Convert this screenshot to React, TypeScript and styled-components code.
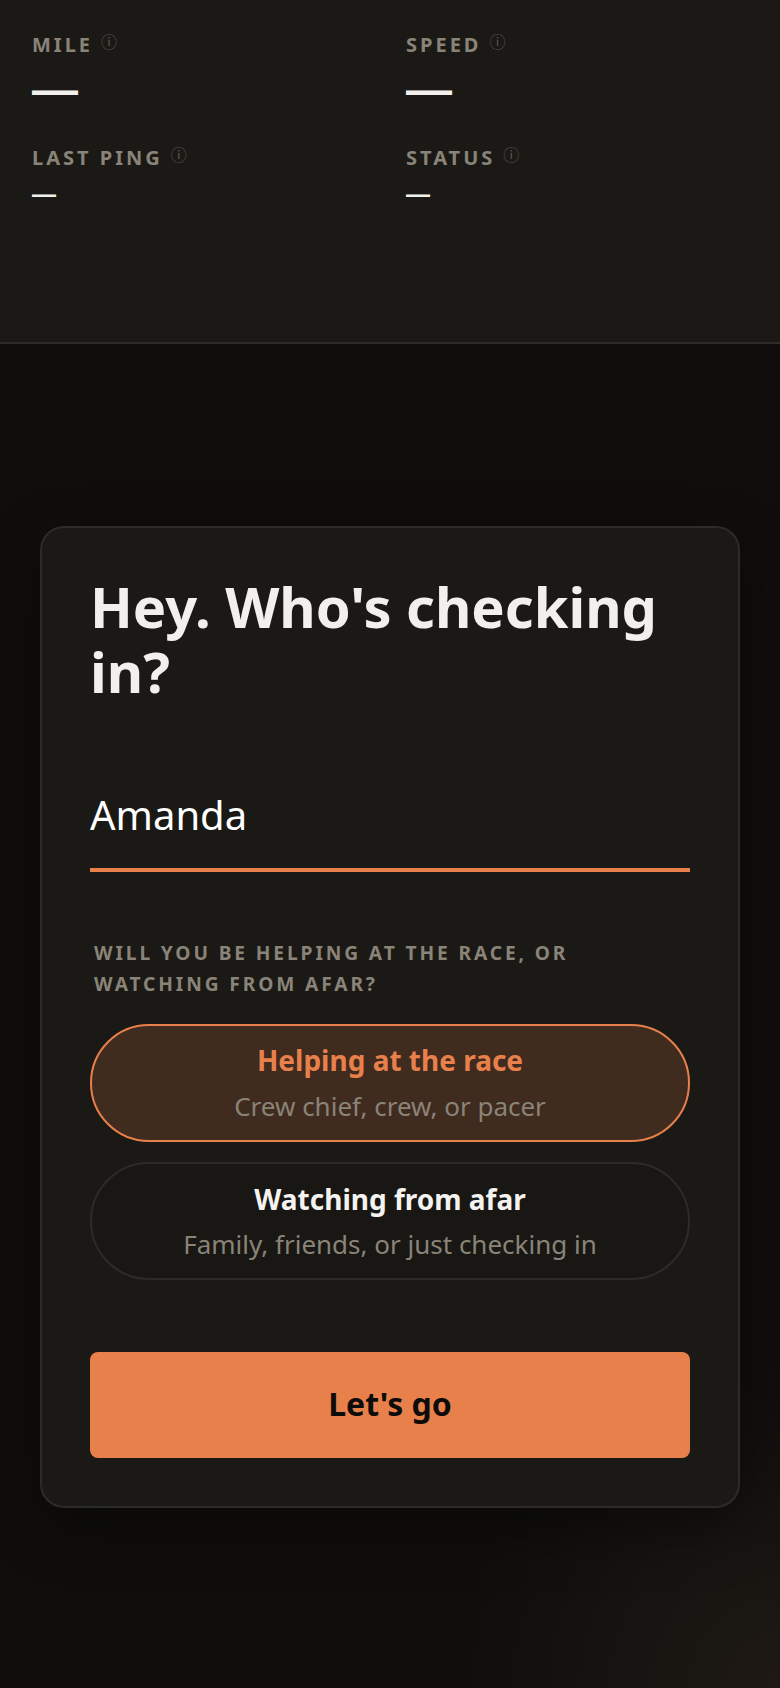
import React from "react";
import styled, { createGlobalStyle } from "styled-components";

const ACCENT = "#e8804c";
const MUTED = "#8a8378";

const Global = createGlobalStyle`
  * { box-sizing: border-box; }
  html, body { margin: 0; padding: 0; background: #0f0e0c; }
  body { font-family: "Noto Sans", sans-serif; color: #f2f0ec; }
`;

const STATS = [
  { label: "MILE", large: true },
  { label: "SPEED", large: true },
  { label: "LAST PING", large: false },
  { label: "STATUS", large: false },
];

const App = () => {
  return (
    <Page>
      <Global />
      <StatsPanel>
        <StatsGrid>
          {STATS.map(stat => (
            <Stat key={stat.label}>
              <StatLabel>
                {stat.label}
                <InfoMark>ⓘ</InfoMark>
              </StatLabel>
              <StatValue $large={stat.large}>—</StatValue>
            </Stat>
          ))}
        </StatsGrid>
      </StatsPanel>

      <Main>
        <Card>
          <Title>Hey. Who's checking in?</Title>
          <NameInput defaultValue="Amanda" />
          <Question>Will you be helping at the race, or watching from afar?</Question>
          <Options>
            <Option $selected>
              <OptionTitle $selected>Helping at the race</OptionTitle>
              <OptionHint $selected>Crew chief, crew, or pacer</OptionHint>
            </Option>
            <Option>
              <OptionTitle>Watching from afar</OptionTitle>
              <OptionHint>Family, friends, or just checking in</OptionHint>
            </Option>
          </Options>
          <GoButton>Let's go</GoButton>
        </Card>
      </Main>
    </Page>
  );
};

const Page = styled.div`
  width: 780px;
  height: 1688px;
  overflow: hidden;
  display: flex;
  flex-direction: column;
  background: radial-gradient(circle at 100% 100%, #1e1915 0, #0f0e0c 320px);
`;

const StatsPanel = styled.header`
  height: 344px;
  padding: 23px 32px 0;
  background: #1a1915;
  border-bottom: 2px solid #2c2b28;
`;

const StatsGrid = styled.div`
  display: grid;
  grid-template-columns: 374px 1fr;
  row-gap: 21px;
`;

const Stat = styled.div`
  display: flex;
  flex-direction: column;
`;

const StatLabel = styled.div`
  font-size: 20px;
  line-height: 36px;
  font-weight: 700;
  letter-spacing: 0.15em;
  color: ${MUTED};
`;

const InfoMark = styled.span`
  margin-left: 8px;
  font-family: "Noto Sans CJK JP", sans-serif;
  font-size: 16px;
  font-weight: 400;
  letter-spacing: 0;
  color: #5c5852;
  vertical-align: 4px;
`;

const StatValue = styled.div<{ $large?: boolean }>`
  font-family: "Liberation Sans", sans-serif;
  font-weight: 700;
  font-size: ${p => (p.$large ? "46px" : "24px")};
  line-height: ${p => (p.$large ? "52px" : "36px")};
`;

const Main = styled.main`
  flex: 1;
  padding: 182px 40px 0;
`;

const Card = styled.section`
  display: flex;
  flex-direction: column;
  padding: 46px 48px 48px;
  background: #1a1915;
  border: 2px solid #2c2b28;
  border-radius: 24px;
  box-shadow: 0 20px 60px rgba(0, 0, 0, 0.4);
`;

const Title = styled.h1`
  margin: 0;
  font-size: 56px;
  line-height: 65px;
  font-weight: 700;
  color: #f2f0ec;
`;

const NameInput = styled.input`
  margin-top: 65px;
  width: 100%;
  height: 103px;
  padding: 0 0 9px;
  border: 0;
  border-bottom: 4px solid ${ACCENT};
  background: transparent;
  outline: none;
  font-family: inherit;
  font-size: 40px;
  color: #fff;
`;

const Question = styled.p`
  margin: 65px 0 25px;
  padding: 0 4px;
  font-size: 19.2px;
  line-height: 31px;
  font-weight: 700;
  letter-spacing: 0.15em;
  text-transform: uppercase;
  color: ${MUTED};
`;

const Options = styled.div`
  display: flex;
  flex-direction: column;
  gap: 20px;
`;

const Option = styled.div<{ $selected?: boolean }>`
  height: 118px;
  padding-bottom: ${p => (p.$selected ? "2px" : "1px")};
  display: flex;
  flex-direction: column;
  align-items: center;
  justify-content: center;
  gap: 8px;
  border: 2px solid ${p => (p.$selected ? ACCENT : "#2c2b28")};
  border-radius: 60px;
  background: ${p => (p.$selected ? "#402b1f" : "#181714")};
`;

const OptionTitle = styled.div<{ $selected?: boolean }>`
  font-size: 28px;
  line-height: 38px;
  font-weight: 700;
  color: ${p => (p.$selected ? ACCENT : "#f5f3ef")};
`;

const OptionHint = styled.div<{ $selected?: boolean }>`
  margin-top: ${p => (p.$selected ? "1px" : "0")};
  font-size: 26px;
  line-height: 36px;
  color: ${MUTED};
`;

const GoButton = styled.button`
  margin-top: 72px;
  height: 106px;
  padding: 0 0 4px;
  border: 0;
  border-radius: 8px;
  background: ${ACCENT};
  font-family: inherit;
  font-size: 32px;
  font-weight: 700;
  color: #0d0c0b;
`;

export default App;
